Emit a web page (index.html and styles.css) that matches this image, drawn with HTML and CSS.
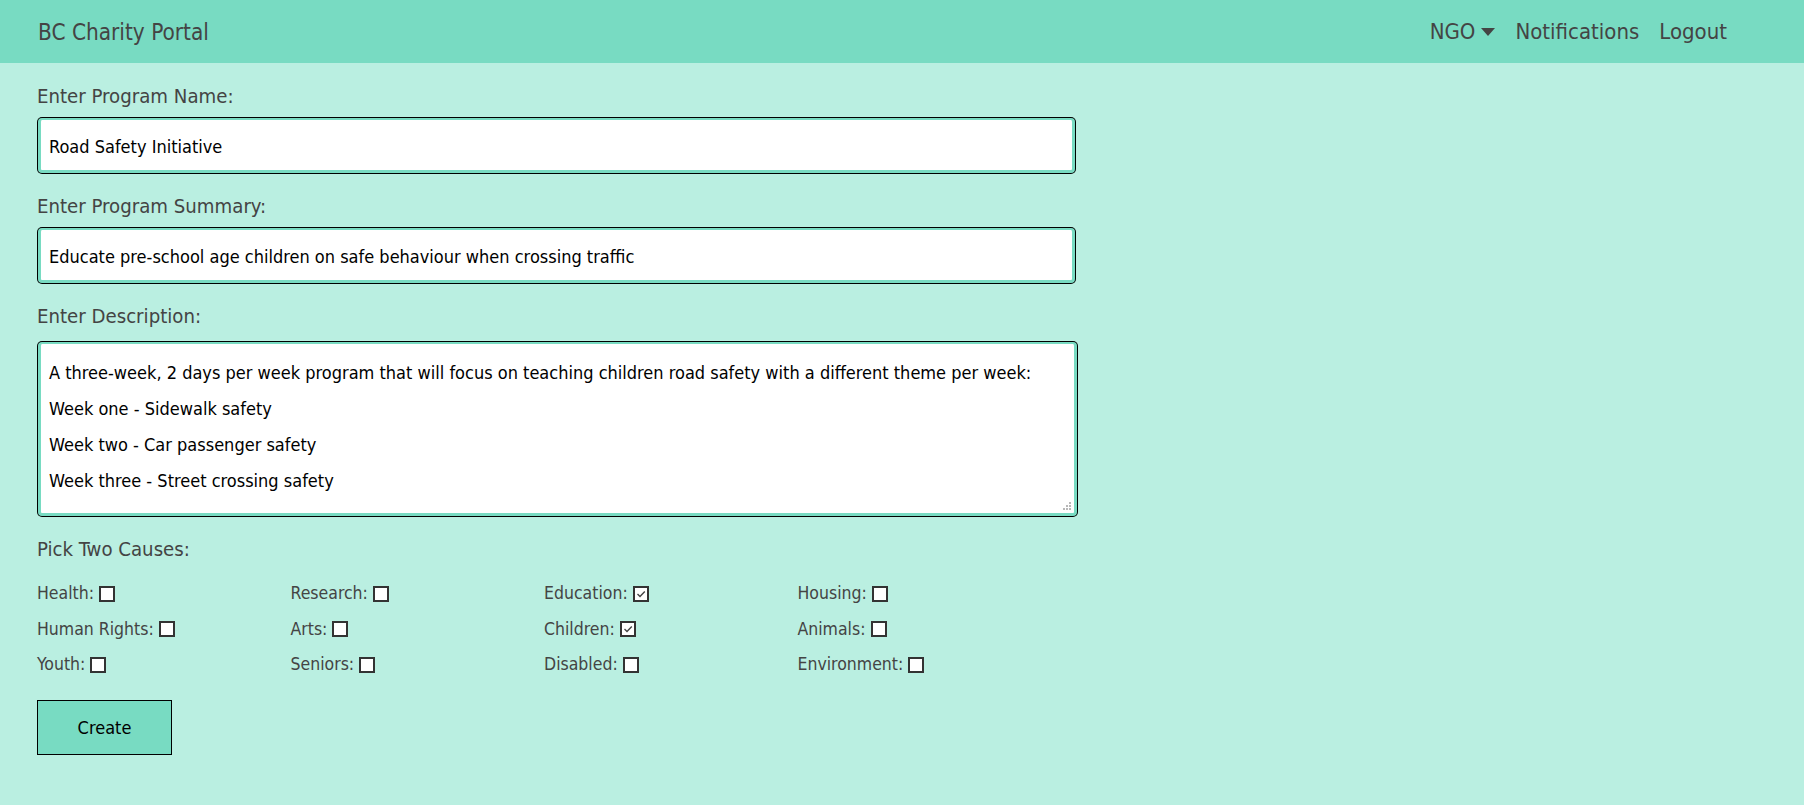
FILE: index.html
```html
<!DOCTYPE html>
<html lang="en">
<head>
<meta charset="utf-8">
<title>BC Charity Portal</title>
<link rel="stylesheet" href="styles.css">
</head>
<body>
<nav class="navbar">
  <div class="brand">BC Charity Portal</div>
  <ul class="nav-links">
    <li class="nav-item dropdown">NGO <svg class="caret" width="14" height="8" viewBox="0 0 14 8"><path d="M0 0 L14 0 L7 8 Z" fill="#444"/></svg></li>
    <li class="nav-item">Notifications</li>
    <li class="nav-item">Logout</li>
  </ul>
</nav>
<main class="form">
  <label class="field-label">Enter Program Name:</label>
  <div class="text-input">Road Safety Initiative</div>
  <label class="field-label">Enter Program Summary:</label>
  <div class="text-input">Educate pre-school age children on safe behaviour when crossing traffic</div>
  <label class="field-label">Enter Description:</label>
  <div class="text-area">
    <div>A three-week, 2 days per week program that will focus on teaching children road safety with a different theme per week:</div>
    <div>Week one - Sidewalk safety</div>
    <div>Week two - Car passenger safety</div>
    <div>Week three - Street crossing safety</div>
    <svg class="grip" width="9" height="9" viewBox="0 0 9 9"><g fill="#b8b8b8"><rect x="6" y="0" width="2" height="2"/><rect x="3" y="3" width="2" height="2"/><rect x="6" y="3" width="2" height="2"/><rect x="0" y="6" width="2" height="2"/><rect x="3" y="6" width="2" height="2"/><rect x="6" y="6" width="2" height="2"/></g></svg>
  </div>
  <label class="field-label">Pick Two Causes:</label>
  <div class="causes">
    <div class="cause">Health: <span class="box"></span></div>
    <div class="cause">Research: <span class="box"></span></div>
    <div class="cause">Education: <span class="box"><svg viewBox="0 0 12 12" width="12" height="12"><path d="M2.5 6 L5 8.5 L9.8 3.5" fill="none" stroke="#444" stroke-width="1.4"/></svg></span></div>
    <div class="cause">Housing: <span class="box"></span></div>
    <div class="cause">Human Rights: <span class="box"></span></div>
    <div class="cause">Arts: <span class="box"></span></div>
    <div class="cause">Children: <span class="box"><svg viewBox="0 0 12 12" width="12" height="12"><path d="M2.5 6 L5 8.5 L9.8 3.5" fill="none" stroke="#444" stroke-width="1.4"/></svg></span></div>
    <div class="cause">Animals: <span class="box"></span></div>
    <div class="cause">Youth: <span class="box"></span></div>
    <div class="cause">Seniors: <span class="box"></span></div>
    <div class="cause">Disabled: <span class="box"></span></div>
    <div class="cause">Environment: <span class="box"></span></div>
  </div>
  <button class="create-btn" type="button">Create</button>
</main>
</body>
</html>
```
FILE: styles.css
```css
html, body {
  margin: 0;
  padding: 0;
}
body {
  background: #baefe1;
  font-family: "DejaVu Sans Condensed", "DejaVu Sans", sans-serif;
  font-stretch: condensed;
  color: #444;
  min-height: 805px;
}
.navbar {
  height: 63px;
  background: #78dbc2;
  display: flex;
  align-items: center;
  justify-content: space-between;
  padding: 0 77px 0 38px;
}
.brand {
  font-size: 22.4px;
  color: #444;
}
.nav-links {
  list-style: none;
  display: flex;
  gap: 20px;
  margin: 0;
  padding: 0;
}
.nav-item {
  font-size: 22px;
  color: #444;
  display: flex;
  align-items: center;
  gap: 6px;
}
.form {
  padding: 12px 0 40px 37px;
  display: flex;
  flex-direction: column;
  align-items: flex-start;
}
.field-label {
  font-size: 20.2px;
  line-height: 42px;
  height: 42px;
  color: #444;
}
.text-input {
  box-sizing: border-box;
  width: 1037px;
  height: 55px;
  background: #fff;
  border: 3px solid #78dbc2;
  border-top-width: 2px;
  border-radius: 4px;
  box-shadow: 0 0 0 1px #000;
  margin: 1px 0 12px 1px;
  padding: 3px 8px 0;
  display: flex;
  align-items: center;
  font-size: 18px;
  color: #000;
}
.text-area {
  position: relative;
  box-sizing: border-box;
  width: 1039px;
  height: 174px;
  background: #fff;
  border: 3px solid #78dbc2;
  border-top-width: 2px;
  border-radius: 4px;
  box-shadow: 0 0 0 1px #000;
  margin: 5px 0 12px 1px;
  padding: 11px 8px 0;
  font-size: 18px;
  line-height: 36px;
  color: #000;
}
.grip {
  position: absolute;
  right: 2px;
  bottom: 2px;
}
.causes {
  display: grid;
  grid-template-columns: repeat(4, 253.5px);
  grid-auto-rows: 35.5px;
  margin-top: 6px;
}
.cause {
  font-size: 17.5px;
  line-height: 35.5px;
  color: #444;
  display: flex;
  align-items: center;
  white-space: pre;
}
.box {
  box-sizing: border-box;
  width: 16px;
  height: 16px;
  border: 2px solid #333;
  background: #fff;
  display: inline-flex;
  align-items: center;
  justify-content: center;
  margin-left: 0;
}
.create-btn {
  margin-top: 17px;
  width: 135px;
  height: 55px;
  background: #78dbc2;
  border: 1px solid #000;
  border-radius: 0;
  font-family: inherit;
  font-stretch: condensed;
  font-size: 18px;
  color: #000;
  padding: 0;
}
```
